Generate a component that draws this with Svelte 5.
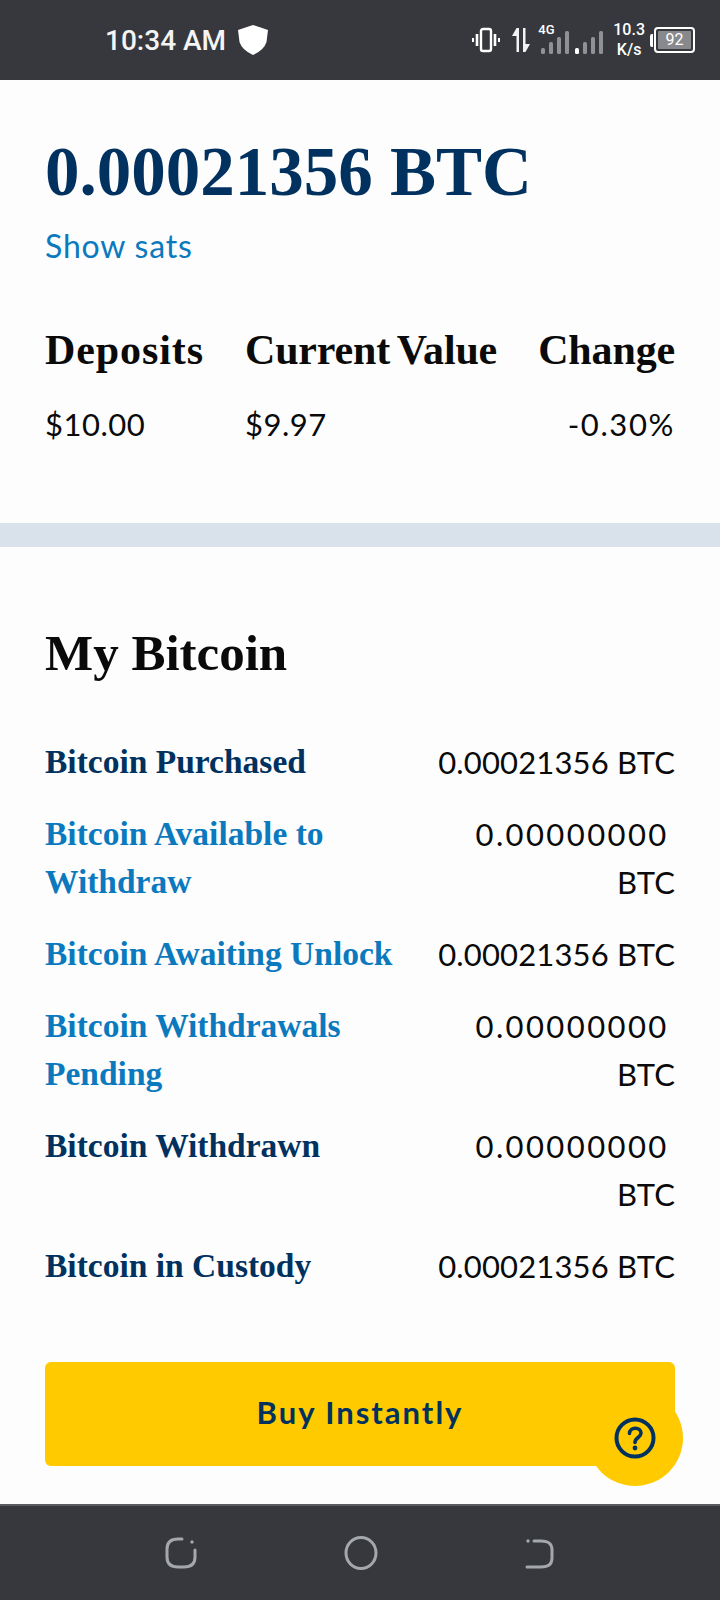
<script>
	const stats = [
		{ label: "Deposits", value: "$10.00" },
		{ label: "Current Value", value: "$9.97" },
		{ label: "Change", value: "-0.30%", right: true },
	];

	const rows = [
		{ label: "Bitcoin Purchased", value: "0.00021356" },
		{ label: "Bitcoin Available to Withdraw", value: "0.00000000", link: true },
		{ label: "Bitcoin Awaiting Unlock", value: "0.00021356", link: true },
		{ label: "Bitcoin Withdrawals Pending", value: "0.00000000", link: true },
		{ label: "Bitcoin Withdrawn", value: "0.00000000" },
		{ label: "Bitcoin in Custody", value: "0.00021356" },
	];

	const bars = [0, 8, 16, 24];
	const heights = [6, 12, 17, 23];
</script>

<div class="screen">
	<header class="status">
		<div class="status-left">
			<span class="time">10:34 AM</span>
			<svg class="shield" width="30" height="30" viewBox="0 0 30 30">
				<path d="M0 5 L15 0 L30 5 L28.500 17 Q26 25 15 30 Q4 25 1.500 17 Z" fill="#fff" />
			</svg>
		</div>
		<div class="status-right">
			<svg width="28" height="26" viewBox="0 0 28 26" fill="none" stroke="#fff">
				<rect x="9" y="2" width="10" height="22" rx="2" stroke-width="2.400" />
				<path d="M5 7v12M23 7v12" stroke-width="2.600" />
				<path d="M1 11v4M27 11v4" stroke-width="2" />
			</svg>
			<svg class="updown" width="18" height="26" viewBox="0 0 18 26" fill="#f2f2f2">
				<path d="M4.500 1 L7 1 L7 25 L4.500 25 L4.500 9 L0 9 Z" />
				<path d="M11 1 L13.500 1 L13.500 17 L18 17 L13.500 25 L11 25 Z" />
			</svg>
			<div class="signal">
				<span class="net">4G</span>
				<svg width="28" height="24" viewBox="0 0 28 24" fill="#8f9194">
					{#each bars as x, i}
						<rect {x} y={24 - heights[i]} width="4" height={heights[i]} rx="1.500" />
					{/each}
				</svg>
			</div>
			<svg class="signal-b" width="28" height="24" viewBox="0 0 28 24" fill="#8f9194">
				{#each bars as x, i}
					<rect {x} y={24 - heights[i]} width="4" height={heights[i]} rx="1.500" fill={i === 0 ? "#fff" : "#8f9194"} />
				{/each}
			</svg>
			<div class="speed"><span>10.3</span><span>K/s</span></div>
			<div class="battery">
				<i class="nub"></i>
				<div class="cell"><span class="level">92</span></div>
			</div>
		</div>
	</header>

	<main>
		<section class="summary">
			<h1>0.00021356 BTC</h1>
			<a class="sats" href="#sats">Show sats</a>
			<div class="stats">
				{#each stats as s}
					<div class="stat" class:right={s.right}>
						<h3>{s.label}</h3>
						<p>{s.value}</p>
					</div>
				{/each}
			</div>
		</section>

		<div class="divider"></div>

		<section class="holdings">
			<h2>My Bitcoin</h2>
			<dl class="rows">
				{#each rows as r}
					<div class="row">
						<dt class:link={r.link}>{r.label}</dt>
						<dd><span class:zero={r.value === "0.00000000"}>{r.value}&nbsp;</span><wbr />BTC</dd>
					</div>
				{/each}
			</dl>
			<div class="cta">
				<button class="buy">Buy Instantly</button>
				<div class="help">
					<svg width="42" height="42" viewBox="0 0 42 42" fill="none">
						<circle cx="21" cy="21" r="18.500" stroke="#00315f" stroke-width="4" />
						<path d="M15.500 16.500 C15.500 9.500 27 9.500 27 16 C27 20.500 21 20.500 21 25.500" stroke="#00315f" stroke-width="3.600" stroke-linecap="round" />
						<circle cx="21" cy="31" r="2.400" fill="#00315f" />
					</svg>
				</div>
			</div>
		</section>
	</main>

	<footer class="nav">
		<svg width="32" height="32" viewBox="0 0 32 32" fill="none" stroke="#a4a7ab" stroke-width="3" stroke-linecap="round">
			<path d="M17 2 H13 C6 2 2 5 2 12 V20 C2 27 6 30 13 30 H19 C26 30 30 27 30 20 V13" />
			<circle cx="27" cy="5" r="1.700" fill="#a4a7ab" stroke="none" />
		</svg>
		<svg width="34" height="34" viewBox="0 0 34 34" fill="none" stroke="#a4a7ab" stroke-width="3">
			<ellipse cx="17" cy="17" rx="15" ry="15.500" />
		</svg>
		<svg width="30" height="32" viewBox="0 0 30 32" fill="none" stroke="#a4a7ab" stroke-width="3" stroke-linecap="round">
			<path d="M9 4 H16 C24 4 27 7 27 13 V21 C27 27 24 30 16 30 H2" />
			<circle cx="3" cy="4" r="1.700" fill="#a4a7ab" stroke="none" />
		</svg>
	</footer>
</div>

<style>
	:global(body) {
		margin: 0;
		background: #fdfdfd;
	}

	.screen {
		width: 720px;
		height: 1600px;
		display: flex;
		flex-direction: column;
		background: #fdfdfd;
		font-family: "Lato", sans-serif;
		overflow: hidden;
	}

	.status {
		height: 80px;
		flex: none;
		background: #36383d;
		display: flex;
		justify-content: space-between;
		align-items: center;
		color: #fff;
		font-family: "Roboto", sans-serif;
		padding: 0 25px 0 105px;
		box-sizing: border-box;
	}

	.status-left {
		display: flex;
		align-items: center;
		gap: 12px;
	}

	.time {
		font-size: 28px;
		font-weight: 500;
		color: #f4f4f4;
	}

	.status-right {
		display: flex;
		align-items: center;
	}

	.updown {
		margin-left: 12px;
	}

	.signal {
		position: relative;
		margin-left: 11px;
		width: 28px;
		height: 24px;
		margin-top: 4px;
	}

	.net {
		position: absolute;
		left: -3px;
		top: -7px;
		font-size: 13px;
		font-weight: 500;
		line-height: 14px;
	}

	.signal svg {
		display: block;
	}

	.signal-b {
		margin-left: 6px;
		margin-top: 4px;
	}

	.speed {
		display: flex;
		flex-direction: column;
		align-items: center;
		margin-left: 10px;
		font-size: 16px;
		line-height: 20px;
		font-weight: 500;
	}

	.battery {
		display: flex;
		align-items: center;
		margin-left: 5px;
	}

	.nub {
		width: 3px;
		height: 13px;
		background: #fff;
		border-radius: 2px 0 0 2px;
		margin-right: 1px;
	}

	.cell {
		width: 33px;
		height: 18px;
		border: 2px solid #fff;
		border-radius: 4px;
		padding: 2px;
		display: flex;
	}

	.level {
		flex: 1;
		background: #87898c;
		font-size: 16px;
		line-height: 18px;
		text-align: center;
		border-radius: 1px;
	}

	main {
		flex: 1;
	}

	.summary {
		padding: 58px 45px 0;
		height: 443px;
		box-sizing: border-box;
	}

	h1 {
		margin: 0;
		font-family: "Liberation Serif", serif;
		font-size: 69px;
		line-height: 68px;
		font-weight: 700;
		color: #00315f;
	}

	.sats {
		display: block;
		margin-top: 20px;
		font-size: 32px;
		line-height: 40px;
		letter-spacing: 0.8px;
		color: #0b79bd;
		text-decoration: none;
	}

	.stats {
		display: flex;
		justify-content: space-between;
		margin-top: 60px;
	}

	.stat.right {
		text-align: right;
	}

	h3 {
		margin: 0;
		font-family: "Liberation Serif", serif;
		font-size: 42px;
		line-height: 48px;
		font-weight: 700;
		word-spacing: -3px;
		letter-spacing: -0.15px;
		color: #0a0a0a;
	}

	.stat:first-child h3 {
		letter-spacing: 0.9px;
	}

	.stat p {
		margin: 30px 0 0;
		font-size: 31px;
		line-height: 40px;
		letter-spacing: 0.5px;
		color: #0a0a0a;
	}

	.stat.right p {
		letter-spacing: 1.6px;
	}

	.divider {
		height: 24px;
		background: #d9e2ea;
	}

	.holdings {
		padding: 76px 45px 0;
	}

	h2 {
		margin: 0;
		font-family: "Liberation Serif", serif;
		font-size: 51px;
		line-height: 60px;
		font-weight: 700;
		color: #0a0a0a;
	}

	.rows {
		margin: 55px 0 0;
		display: flex;
		flex-direction: column;
		gap: 24px;
	}

	.row {
		display: flex;
		justify-content: space-between;
		line-height: 48px;
	}

	dt {
		width: 375px;
		font-family: "Liberation Serif", serif;
		font-size: 33.500px;
		font-weight: 700;
		color: #00315f;
	}

	dt.link {
		color: #0b79bd;
	}

	dd {
		margin: 0;
		width: 240px;
		text-align: right;
		font-size: 31px;
		letter-spacing: 0.15px;
		color: #0a0a0a;
	}

	.zero {
		letter-spacing: 2.400px;
		margin-right: -4px;
	}

	.cta {
		position: relative;
		margin-top: 72px;
	}

	.buy {
		display: block;
		width: 100%;
		height: 104px;
		border: none;
		border-radius: 6px;
		background: #ffcb00;
		color: #00315f;
		font-family: "Lato", sans-serif;
		font-size: 31px;
		font-weight: 700;
		letter-spacing: 2px;
		padding: 0 0 4px;
	}

	.help {
		position: absolute;
		right: -8px;
		bottom: -20px;
		width: 96px;
		height: 96px;
		border-radius: 50%;
		background: #ffcb00;
		display: flex;
		align-items: center;
		justify-content: center;
	}

	.nav {
		height: 96px;
		flex: none;
		background: #36383d;
		border-top: 2px solid #5b5c60;
		box-sizing: border-box;
		display: flex;
		justify-content: center;
		align-items: center;
		gap: 147px;
	}
</style>
